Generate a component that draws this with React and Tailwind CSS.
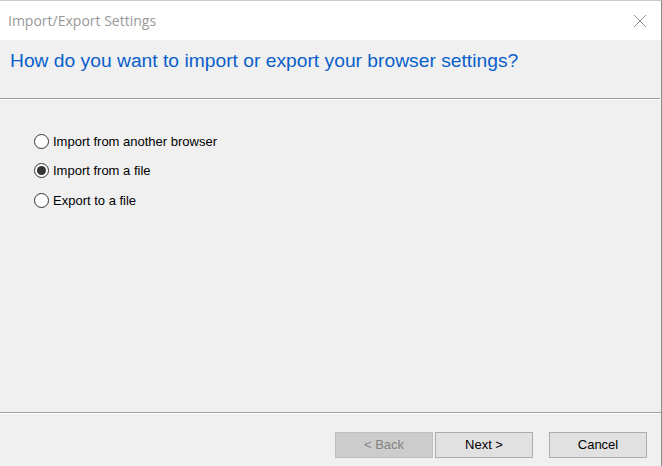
export default function App() {
  const Radio = ({ checked, label }) => (
    <div className="flex items-center h-[14px]">
      <div className="w-[15px] h-[15px] rounded-full border border-[#333333] bg-white flex items-center justify-center">
        {checked && <div className="w-[9px] h-[9px] rounded-full bg-[#333333]" />}
      </div>
      <span className="ml-[4px] text-[13px] text-black leading-none" style={{ fontFamily: '"Liberation Sans", Arial, sans-serif' }}>{label}</span>
    </div>
  );
  return (
    <div className="w-[662px] h-[466px] bg-[#f0f0f0] flex flex-col border-t border-[#cccccc] border-r border-r-[#8a8a8a] overflow-hidden" style={{ fontFamily: '"Liberation Sans", Arial, sans-serif' }}>
      <div className="h-[39px] bg-white flex items-center justify-between pl-[8px] pr-[14px] shrink-0">
        <span className="text-[14px] text-[#999999]" style={{ fontFamily: '"Open Sans", "Noto Sans", sans-serif' }}>Import/Export Settings</span>
        <svg width="14" height="14" viewBox="0 0 14 14">
          <path d="M1 1 L13 13 M13 1 L1 13" stroke="#8c8c8c" strokeWidth="1" fill="none" />
        </svg>
      </div>
      <div className="h-[58px] shrink-0 pl-[10px] pt-[7px]">
        <span className="text-[19.25px] text-[#0a5fcc]">How do you want to import or export your browser settings?</span>
      </div>
      <div className="h-px bg-[#a0a0a0] shrink-0 mr-[1px]" />
      <div className="h-px bg-white shrink-0" />
      <div className="flex-1 flex flex-col pl-[34px] pt-[34px] gap-[15.5px]">
        <Radio label="Import from another browser" />
        <Radio checked label="Import from a file" />
        <Radio label="Export to a file" />
      </div>
      <div className="h-px bg-[#a0a0a0] shrink-0" />
      <div className="h-px bg-white shrink-0" />
      <div className="h-[52px] shrink-0 flex items-start pt-[18px] pl-[335px]">
        <button className="w-[98px] h-[26px] bg-[#cccccc] border border-[#bfbfbf] text-[13px] text-[#838383]">&lt; Back</button>
        <button className="ml-[2px] w-[98px] h-[26px] bg-[#e1e1e1] border border-[#adadad] text-[13px] text-black">Next &gt;</button>
        <button className="ml-[16px] w-[98px] h-[26px] bg-[#e1e1e1] border border-[#adadad] text-[13px] text-black">Cancel</button>
      </div>
    </div>
  );
}
